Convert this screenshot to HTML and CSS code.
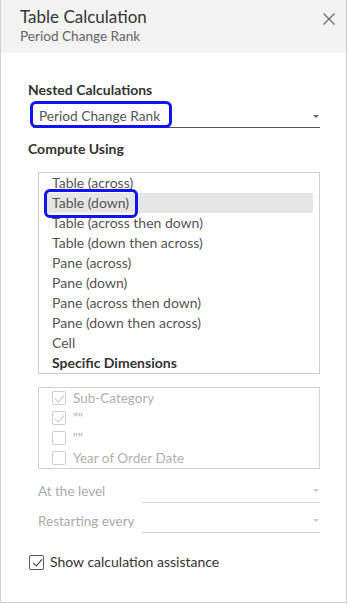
FILE: index.html
```html
<!doctype html>
<html lang="en">
<head>
<meta charset="utf-8">
<title>Table Calculation</title>
<link rel="stylesheet" href="styles.css">
</head>
<body>

	<div class="panel">

		<div class="head">
			<div>
				<div class="title">Table Calculation</div>
				<div class="subtitle">Period Change Rank</div>
			</div>
			<svg class="close" width="12" height="12" viewBox="0 0 12 12"><path d="M0.5 0.5 L11.5 11.5 M11.5 0.5 L0.5 11.5" stroke="#6b6b6b" stroke-width="1.2" fill="none"/></svg>
		</div>

		<div class="content">

			<div class="label">Nested Calculations</div>

			<div class="dropdown">
				<span class="marked mark-select">Period Change Rank</span>
				<span class="arrow"></span>
			</div>

			<div class="label compute">Compute Using</div>

			<div class="listbox">
				<div class="item">Table (across)</div>
				<div class="item selected"><span class="marked mark-item">Table (down)</span></div>
				<div class="item">Table (across then down)</div>
				<div class="item">Table (down then across)</div>
				<div class="item">Pane (across)</div>
				<div class="item">Pane (down)</div>
				<div class="item">Pane (across then down)</div>
				<div class="item">Pane (down then across)</div>
				<div class="item">Cell</div>
				<div class="item bold">Specific Dimensions</div>
			</div>

			<div class="dims">
				<div class="dim"><span class="box checked"></span>Sub-Category</div>
				<div class="dim"><span class="box checked"></span>""</div>
				<div class="dim"><span class="box"></span>""</div>
				<div class="dim"><span class="box"></span>Year of Order Date</div>
			</div>

			<div class="level first">
				<span class="level-label">At the level</span>
				<span class="level-select"><span class="arrow off"></span></span>
			</div>
			<div class="level">
				<span class="level-label">Restarting every</span>
				<span class="level-select"><span class="arrow off"></span></span>
			</div>

			<div class="assist">
				<span class="box on checked"></span>Show calculation assistance
			</div>

		</div>

	</div>

</body>
</html>
```

FILE: styles.css
```css
/* table calculation dialog */

	html, body { margin: 0; height: 100%; background: #fff; }
	body { font: 14px Lato, "Open Sans", sans-serif; color: #555; }

	.panel { width: 347px; height: 603px; box-sizing: border-box; border: 1px solid #cfcfcf; border-top: 0; }

	.head { background-color: #f3f3f3; height: 53px; box-sizing: border-box; padding: 7px 11px 0 19px;
		display: flex; justify-content: space-between; align-items: flex-start; }
	.title { font-size: 17px; line-height: 20px; color: #333; }
	.subtitle { font-size: 13.6px; line-height: 18px; color: #666; }
	.close { margin-top: 6px; }

	.content { padding: 29px 26px 0 27px; }

	.label { font-weight: bold; line-height: 16px; color: #333; }
	.compute { margin-top: 13px; }

	.dropdown { margin: 9px 0 0 5px; padding: 0 0 2px 6px; border-bottom: 1px solid #555; font-size: 13.7px; line-height: 18px;
		display: flex; justify-content: space-between; align-items: center; }

	.arrow { width: 0; height: 0; border-left: 3px solid transparent; border-right: 3px solid transparent; border-top: 3px solid #666; margin-right: 1px; }
	.arrow.off { border-top-color: #c8c8c8; }

	.marked { position: relative; }
	.marked::after { content: ""; position: absolute; border: 3px solid #1212f2; border-radius: 6px; }
	.mark-select::after { left: -9px; right: -12px; top: -6px; bottom: -3px; }
	.mark-item::after { left: -8px; right: -9px; top: -5px; bottom: -7px; }

	.listbox { margin: 15px 0 0 10px; border: 1px solid #cfcfcf; line-height: 20px; }
	.item { margin: 0 6px 0 6px; padding-left: 7px; }
	.item.selected { background-color: #e6e6e6; }
	.item.bold { font-weight: bold; color: #333; }

	.dims { margin: 13px 0 0 10px; border: 1px solid #d4d4d4; font-size: 13.5px; line-height: 20px; color: #b0b0b0; }
	.dim { display: flex; align-items: center; padding-left: 13px; }

	.box { width: 14px; height: 14px; box-sizing: border-box; border: 1px solid #d0d0d0; border-radius: 2px; margin-right: 7px; position: relative; flex: none; }
	.box.checked::after { content: ""; position: absolute; left: 4px; top: 1px; width: 4px; height: 8px;
		border: solid #c4c4c4; border-width: 0 1px 1px 0; transform: rotate(40deg); }

	.level { display: flex; align-items: center; height: 25px; margin-left: 10px; color: #ababab; font-size: 13.5px; line-height: 18px; }
	.level.first { margin-top: 9px; }
	.level + .level { margin-top: 5px; }
	.level-label { width: 104px; flex: none; }
	.level-select { flex: 1; align-self: stretch; border-bottom: 1px solid #d4d4d4; display: flex; justify-content: flex-end; align-items: center; }

	.assist { display: flex; align-items: center; margin: 20px 0 0 1px; font-size: 14px; line-height: 18px; color: #333; }
	.box.on { width: 15px; height: 15px; border-color: #555; margin-right: 6px; }
	.box.on::after { border-color: #333; border-width: 0 1.5px 1.5px 0; left: 4.5px; }
```
